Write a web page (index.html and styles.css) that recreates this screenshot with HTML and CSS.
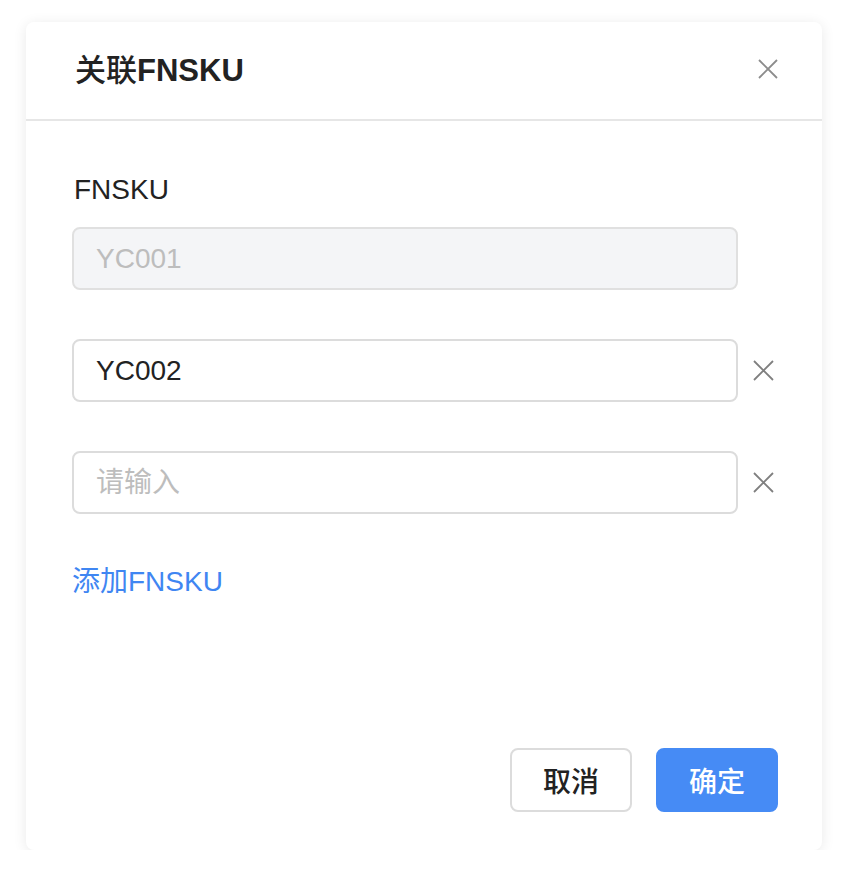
FILE: index.html
```html
<!DOCTYPE html>
<html lang="zh-CN">
<head>
    <meta charset="UTF-8">
    <meta name="viewport" content="width=device-width, initial-scale=1.0">
    <title>关联FNSKU</title>
    <link rel="stylesheet" href="styles.css">
</head>
<body>
    <div class="dialog">
        <header class="dialog-header">
            <h1>关联<span class="title-code">FNSKU</span></h1>
            <button type="button" class="icon-btn close-btn" title="关闭">
                <svg width="20" height="20" viewBox="0 0 20 20"><path d="M1 1L19 19M19 1L1 19" stroke="currentColor" stroke-width="1.8" fill="none"/></svg>
            </button>
        </header>
        <form class="dialog-body" id="fnsku-form">
            <label class="field-label" for="fnsku-1">FNSKU</label>
            <div class="field-row">
                <input type="text" id="fnsku-1" value="YC001" disabled>
                <span class="row-spacer"></span>
            </div>
            <div class="field-row">
                <input type="text" value="YC002">
                <button type="button" class="icon-btn delete-btn" title="删除">
                    <svg width="21" height="21" viewBox="0 0 21 21"><path d="M1 1L20 20M20 1L1 20" stroke="currentColor" stroke-width="1.8" fill="none"/></svg>
                </button>
            </div>
            <div class="field-row">
                <input type="text" placeholder="请输入">
                <button type="button" class="icon-btn delete-btn" title="删除">
                    <svg width="21" height="21" viewBox="0 0 21 21"><path d="M1 1L20 20M20 1L1 20" stroke="currentColor" stroke-width="1.8" fill="none"/></svg>
                </button>
            </div>
            <a href="#" class="add-link">添加FNSKU</a>
        </form>
        <footer class="dialog-footer">
            <button type="button" class="btn">取消</button>
            <button type="submit" form="fnsku-form" class="btn btn-primary">确定</button>
        </footer>
    </div>
</body>
</html>
```

FILE: styles.css
```css
body {
    margin: 0;
    background: #fff;
    font-family: "Liberation Sans", "Noto Sans CJK SC", sans-serif;
    color: #222;
}
.dialog {
    width: 796px;
    margin: 22px 0 0 26px;
    background: #fff;
    border-radius: 8px;
    box-shadow: 0 2px 14px rgba(0, 0, 0, 0.09);
}
.dialog-header {
    height: 99px;
    box-sizing: border-box;
    padding: 0 44px 0 49px;
    display: flex;
    align-items: center;
    justify-content: space-between;
    border-bottom: 2px solid #e6e6e6;
}
.dialog-header h1 {
    margin: 0;
    font-size: 31px;
    line-height: 32px;
    font-weight: 500;
    color: #222;
}
.title-code {
    font-weight: 700;
}
.icon-btn {
    border: none;
    background: none;
    padding: 0;
    cursor: pointer;
    display: flex;
}
.close-btn {
    color: #8c8c8c;
    margin-bottom: 4px;
}
.dialog-body {
    padding: 55px 44px 0 46px;
    display: flex;
    flex-direction: column;
    align-items: flex-start;
}
.field-label {
    font-size: 28px;
    line-height: 28px;
    margin-bottom: 23px;
    margin-left: 2px;
}
.field-row {
    width: 100%;
    display: flex;
    align-items: center;
    margin-bottom: 49px;
}
.field-row input {
    flex: 1;
    height: 63px;
    box-sizing: border-box;
    padding: 0 22px;
    border: 2px solid #dcdcdc;
    border-radius: 8px;
    font-family: inherit;
    font-size: 28px;
    color: #222;
    outline: none;
    background: #fff;
}
.field-row input::placeholder {
    color: #bdbdbd;
}
.field-row input:disabled {
    background: #f4f5f7;
    border-color: #e0e0e0;
    color: #bdbdbd;
}
.row-spacer,
.delete-btn {
    width: 40px;
    flex: none;
}
.delete-btn {
    box-sizing: border-box;
    padding-left: 15px;
    color: #7f7f7f;
}
.add-link {
    margin-top: 5px;
    font-size: 28px;
    line-height: 28px;
    color: #3f86f2;
    text-decoration: none;
}
.dialog-footer {
    display: flex;
    justify-content: flex-end;
    gap: 24px;
    padding: 152px 44px 38px 0;
}
.btn {
    width: 122px;
    height: 64px;
    box-sizing: border-box;
    border: 2px solid #dcdcdc;
    border-radius: 8px;
    background: #fff;
    font-family: inherit;
    font-size: 28px;
    font-weight: 500;
    color: #222;
    cursor: pointer;
}
.btn-primary {
    border-color: #468bf5;
    background: #468bf5;
    color: #fff;
}
```
